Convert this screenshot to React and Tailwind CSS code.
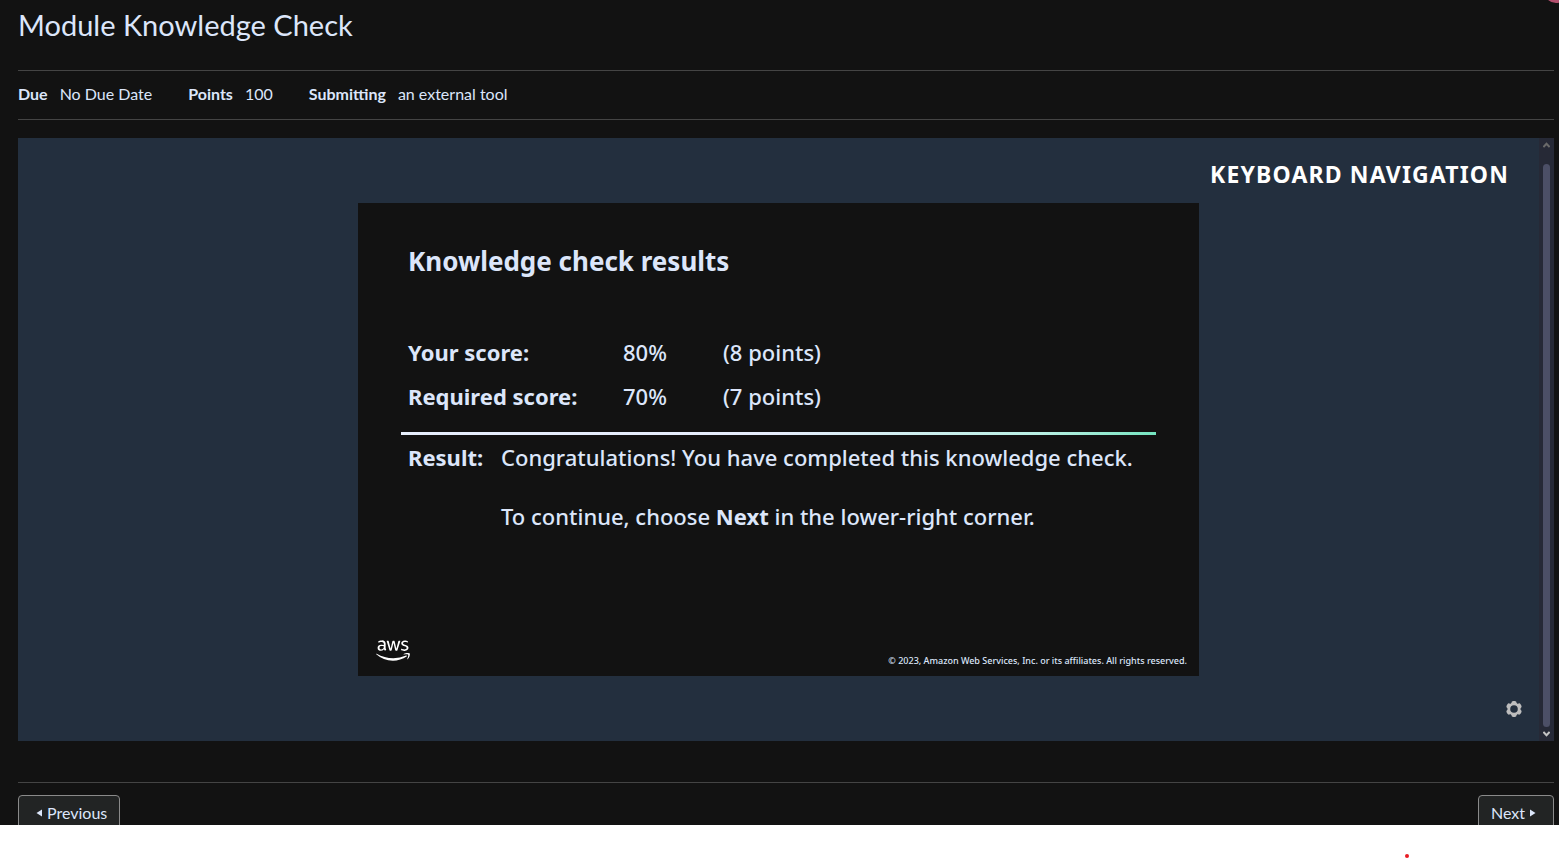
import { FaAws } from "react-icons/fa";

const details = [
  { label: "Due", value: "No Due Date" },
  { label: "Points", value: "100" },
  { label: "Submitting", value: "an external tool" },
];

const scores = [
  { label: "Your score:", percent: "80%", points: "(8 points)" },
  { label: "Required score:", percent: "70%", points: "(7 points)" },
];

const lobes = [0, 60, 120, 180, 240, 300];

function GearIcon() {
  return (
    <svg viewBox="0 0 18 18" className="size-[18px]" aria-hidden="true">
      <mask id="gear-hole">
        <rect width="18" height="18" fill="white" />
        <circle cx="9" cy="9" r="3.8" fill="black" />
      </mask>
      <g fill="#bdbdbd" mask="url(#gear-hole)">
        <circle cx="9" cy="9" r="6.5" />
        {lobes.map((angle) => (
          <rect key={angle} x="6.4" y="0.9" width="5.2" height="5" rx="2" transform={`rotate(${angle} 9 9)`} />
        ))}
      </g>
    </svg>
  );
}

function Chevron({ down }) {
  return (
    <svg viewBox="0 0 7 6" className="h-[6px] w-[7px]" fill="none" strokeWidth="2" aria-hidden="true">
      <path d={down ? "M0.4 0.9 3.5 4.2 6.6 0.9" : "M0.4 5.1 3.5 1.8 6.6 5.1"} stroke={down ? "#c4c4c4" : "#6a6a6a"} />
    </svg>
  );
}

function Scrollbar() {
  return (
    <div className="flex w-[15px] shrink-0 flex-col items-center bg-[#262936] pt-1 pb-1">
      <Chevron />
      <div className="mt-4 mb-1 w-[7px] flex-1 rounded-full bg-[#4c4f66]" />
      <Chevron down />
    </div>
  );
}

function Slide() {
  return (
    <article className="mx-auto flex aspect-[841/473] w-full max-w-[841px] flex-col bg-[#121212] pt-[40px] text-[22px] leading-[30px] font-medium text-[#dce6fa]">
      <h2 className="px-[50px] text-[26px] leading-[36px] font-bold">Knowledge check results</h2>
      <table className="mt-[51px] ml-[50px] w-[480px] table-fixed text-left">
        <tbody>
          {scores.map((row) => (
            <tr key={row.label} className="h-11">
              <th scope="row" className="w-[215px] font-bold">{row.label}</th>
              <td className="w-[100px]">{row.percent}</td>
              <td>{row.points}</td>
            </tr>
          ))}
        </tbody>
      </table>
      <div className="mx-[43px] mt-[14px] h-[3px] bg-linear-to-r from-[#e6eefc] from-50% via-[#b8f0e4] via-85% to-[#74e4c0]" />
      <div className="mt-[7px] flex px-[50px]">
        <strong className="w-[93px] shrink-0 font-bold">Result:</strong>
        <div className="flex flex-col gap-[29px] whitespace-nowrap">
          <p>Congratulations! You have completed this knowledge check.</p>
          <p>
            To continue, choose <strong className="font-bold">Next</strong> in the lower-right corner.
          </p>
        </div>
      </div>
      <footer className="mt-auto flex items-end justify-between pr-3 pb-2 pl-[18px]">
        <FaAws className="mb-1 h-[27px] w-[34px] text-white" role="img" aria-label="aws" />
        <small className="text-[9px] leading-[14px]">
          © 2023, Amazon Web Services, Inc. or its affiliates. All rights reserved.
        </small>
      </footer>
    </article>
  );
}

export default function App() {
  return (
    <div className="min-h-screen bg-white font-['Lato',sans-serif] text-base text-[#dce6fa]">
      <main className="relative overflow-hidden bg-[#121212] pr-[5px] pl-[18px]">
        <div className="absolute -top-[21px] -right-[9px] size-6 rounded-full bg-[#b3506e]" />
        <h1 className="pt-1 pb-[24px] text-[29px] leading-[42px]">Module Knowledge Check</h1>
        <ul className="flex gap-9 border-y border-[#444] pt-[11px] pb-[13px] leading-6">
          {details.map((item) => (
            <li key={item.label} className="flex gap-3">
              <span className="font-bold">{item.label}</span>
              <span>{item.value}</span>
            </li>
          ))}
        </ul>

        <section className="mt-[18px] flex bg-[#232f3e] font-['Noto_Sans',sans-serif]">
          <div className="flex flex-1 flex-col">
            <div className="flex justify-end pt-5 pr-[30px] pb-[13px]">
              <button type="button" className="text-[23px] leading-8 font-bold tracking-wider text-white">
                KEYBOARD NAVIGATION
              </button>
            </div>
            <Slide />
            <div className="flex justify-end pt-6 pr-4 pb-[23px]">
              <button type="button" aria-label="Settings">
                <GearIcon />
              </button>
            </div>
          </div>
          <Scrollbar />
        </section>

        <nav className="mt-[41px] flex h-[43px] items-start justify-between border-t border-[#444] pt-3">
          <a href="#previous" className="flex h-9 items-center gap-[5px] rounded-[4px] border border-[#8a8a8a] bg-[#222424] pr-3 pl-[17px]">
            <svg viewBox="0 0 6 8" className="h-[8px] w-[6px]" fill="currentColor" aria-hidden="true">
              <path d="M6 0.5v7L0.5 4z" />
            </svg>
            Previous
          </a>
          <a href="#next" className="flex h-9 items-center gap-[5px] rounded-[4px] border border-[#8a8a8a] bg-[#222424] pr-[17px] pl-3">
            Next
            <svg viewBox="0 0 6 8" className="h-[8px] w-[6px]" fill="currentColor" aria-hidden="true">
              <path d="M0 0.5v7L5.5 4z" />
            </svg>
          </a>
        </nav>
      </main>
      <div className="flex justify-end pt-[29px] pr-[150px]">
        <span className="size-1 rounded-full bg-[#e81c24]" />
      </div>
    </div>
  );
}
